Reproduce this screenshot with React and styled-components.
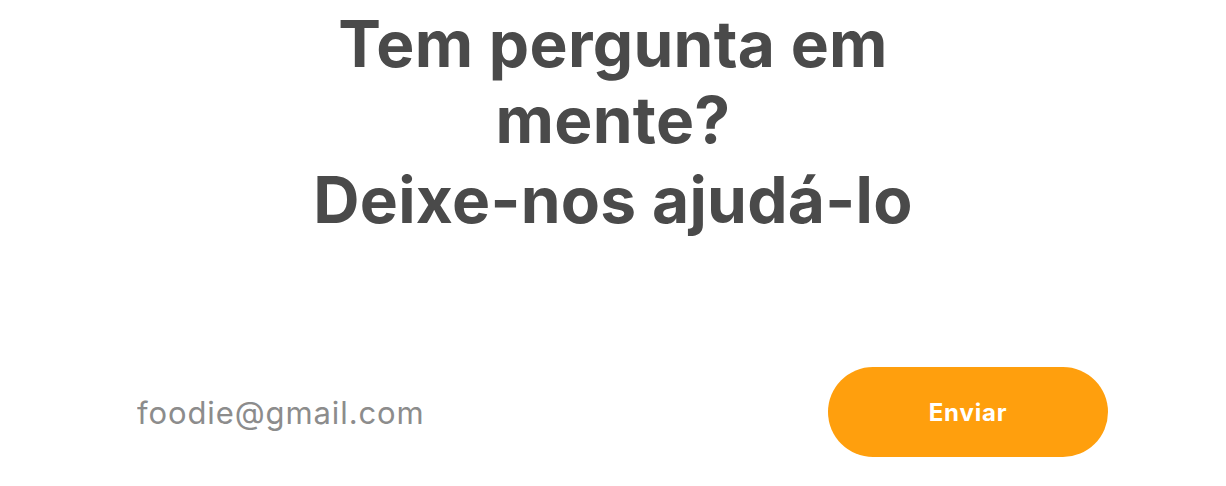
import React from "react";
import styled, { createGlobalStyle } from "styled-components";

const colors = {
  title: "#4a4a4a",
  placeholder: "#8c8c8c",
  orange: "#ff9f0d",
  white: "#ffffff",
};

const GlobalStyle = createGlobalStyle`
  * { box-sizing: border-box; }
  html, body {
    margin: 0;
    padding: 0;
    background: ${colors.white};
    font-family: "Inter", "Liberation Sans", sans-serif;
  }
`;

const Section = styled.section`
  display: flex;
  flex-direction: column;
  align-items: center;
  padding-top: 6px;
`;

const Title = styled.h2`
  margin: 0;
  max-width: 640px;
  text-align: center;
  font-family: "Inter", "Liberation Sans", sans-serif;
  font-weight: 700;
  font-size: 64px;
  letter-spacing: 0.3px;
  line-height: 76px;
  color: ${colors.title};

  span {
    display: block;
    margin-top: 4px;
  }
`;

const Form = styled.form`
  width: 990px;
  margin-top: 129px;
  display: flex;
  align-items: center;
  justify-content: space-between;
`;

const EmailInput = styled.input`
  flex: 1;
  border: none;
  outline: none;
  background: transparent;
  padding: 0 0 0 19px;
  height: 90px;
  font-family: "Inter", "Liberation Sans", sans-serif;
  font-size: 31px;
  letter-spacing: 0.9px;
  color: ${colors.title};

  &::placeholder {
    color: ${colors.placeholder};
  }
`;

const SendButton = styled.button`
  width: 280px;
  height: 90px;
  border: none;
  border-radius: 45px;
  background: ${colors.orange};
  color: ${colors.white};
  font-family: "Inter", "Liberation Sans", sans-serif;
  font-weight: 700;
  font-size: 24px;
  letter-spacing: 0.8px;
  cursor: pointer;
`;

export default function App() {
  return (
    <>
      <GlobalStyle />
      <Section>
        <Title>
          Tem pergunta em mente?
          <span>Deixe-nos ajudá-lo</span>
        </Title>
        <Form onSubmit={(e) => e.preventDefault()}>
          <EmailInput type="email" placeholder="foodie@gmail.com" />
          <SendButton type="submit">Enviar</SendButton>
        </Form>
      </Section>
    </>
  );
}
